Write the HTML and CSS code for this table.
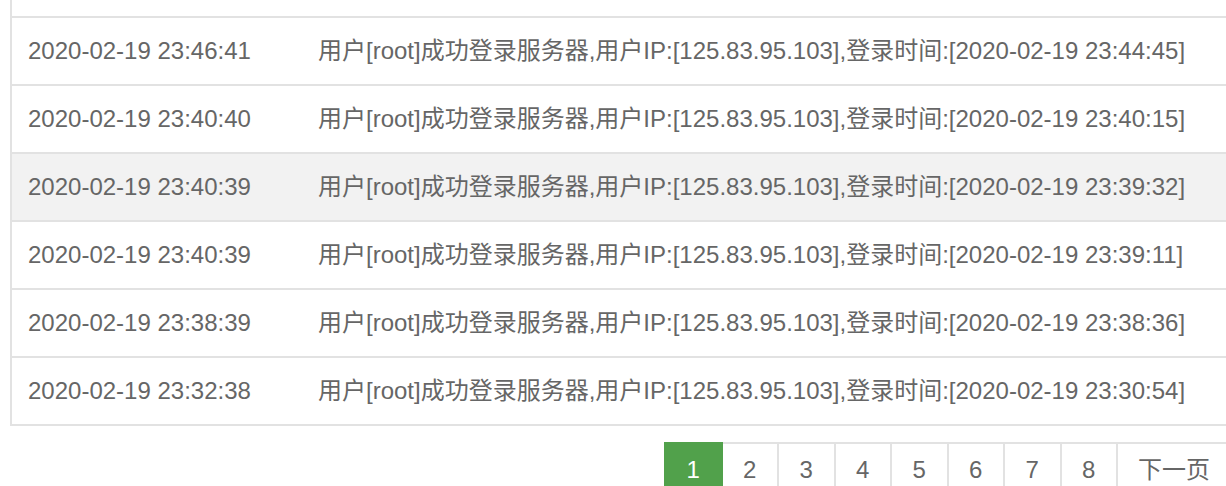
FILE: index.html
```html
<!DOCTYPE html>
<html lang="zh-CN">
<head>
<meta charset="utf-8">
<title>登录日志</title>
<link rel="stylesheet" href="styles.css">
</head>
<body>
<div class="page">
  <div class="log-table">
    <div class="row row-cut"></div>
    <div class="row">
      <div class="cell cell-time">2020-02-19 23:46:41</div>
      <div class="cell cell-msg">用户[root]成功登录服务器,用户IP:[125.83.95.103],登录时间:[2020-02-19 23:44:45]</div>
    </div>
    <div class="row">
      <div class="cell cell-time">2020-02-19 23:40:40</div>
      <div class="cell cell-msg">用户[root]成功登录服务器,用户IP:[125.83.95.103],登录时间:[2020-02-19 23:40:15]</div>
    </div>
    <div class="row row-hover">
      <div class="cell cell-time">2020-02-19 23:40:39</div>
      <div class="cell cell-msg">用户[root]成功登录服务器,用户IP:[125.83.95.103],登录时间:[2020-02-19 23:39:32]</div>
    </div>
    <div class="row">
      <div class="cell cell-time">2020-02-19 23:40:39</div>
      <div class="cell cell-msg">用户[root]成功登录服务器,用户IP:[125.83.95.103],登录时间:[2020-02-19 23:39:11]</div>
    </div>
    <div class="row">
      <div class="cell cell-time">2020-02-19 23:38:39</div>
      <div class="cell cell-msg">用户[root]成功登录服务器,用户IP:[125.83.95.103],登录时间:[2020-02-19 23:38:36]</div>
    </div>
    <div class="row">
      <div class="cell cell-time">2020-02-19 23:32:38</div>
      <div class="cell cell-msg">用户[root]成功登录服务器,用户IP:[125.83.95.103],登录时间:[2020-02-19 23:30:54]</div>
    </div>
  </div>
  <div class="pager">
    <span class="pg pg-current">1</span>
    <a class="pg" href="#">2</a>
    <a class="pg" href="#">3</a>
    <a class="pg" href="#">4</a>
    <a class="pg" href="#">5</a>
    <a class="pg" href="#">6</a>
    <a class="pg" href="#">7</a>
    <a class="pg" href="#">8</a>
    <a class="pg pg-next" href="#">下一页</a>
  </div>
</div>
</body>
</html>
```
FILE: styles.css
```css
html, body {
  margin: 0;
  padding: 0;
  background: #ffffff;
  overflow: hidden;
}
body {
  width: 1226px;
  height: 486px;
  font-family: "Liberation Sans", Arial, "Noto Sans CJK SC", sans-serif;
  font-size: 24px;
  color: #666666;
}
.page {
  width: 1222px;
  padding-left: 10px;
}
.log-table {
  border-left: 2px solid #e2e2e2;
}
.row {
  display: flex;
  align-items: center;
  height: 66px;
  border-bottom: 2px solid #e2e2e2;
}
.row-cut {
  height: 16px;
}
.row-hover {
  background: #f2f2f2;
}
.cell {
  padding-left: 16px;
  white-space: nowrap;
  line-height: 32px;
}
.cell-time {
  width: 274px;
  flex: none;
}
.cell-msg {
  flex: 1;
}
.pager {
  display: flex;
  justify-content: flex-end;
  margin-top: 16px;
}
.pg {
  box-sizing: border-box;
  height: 56px;
  line-height: 52px;
  min-width: 58.5px;
  padding: 0 20px;
  margin-left: -2px;
  border: 2px solid #e2e2e2;
  background: #ffffff;
  color: #666666;
  text-align: center;
  text-decoration: none;
  font-size: 24px;
}
.pg-current {
  background: #51a14b;
  border-color: #51a14b;
  color: #ffffff;
  position: relative;
}
.pg-next {
  padding: 0 20px;
}
```
